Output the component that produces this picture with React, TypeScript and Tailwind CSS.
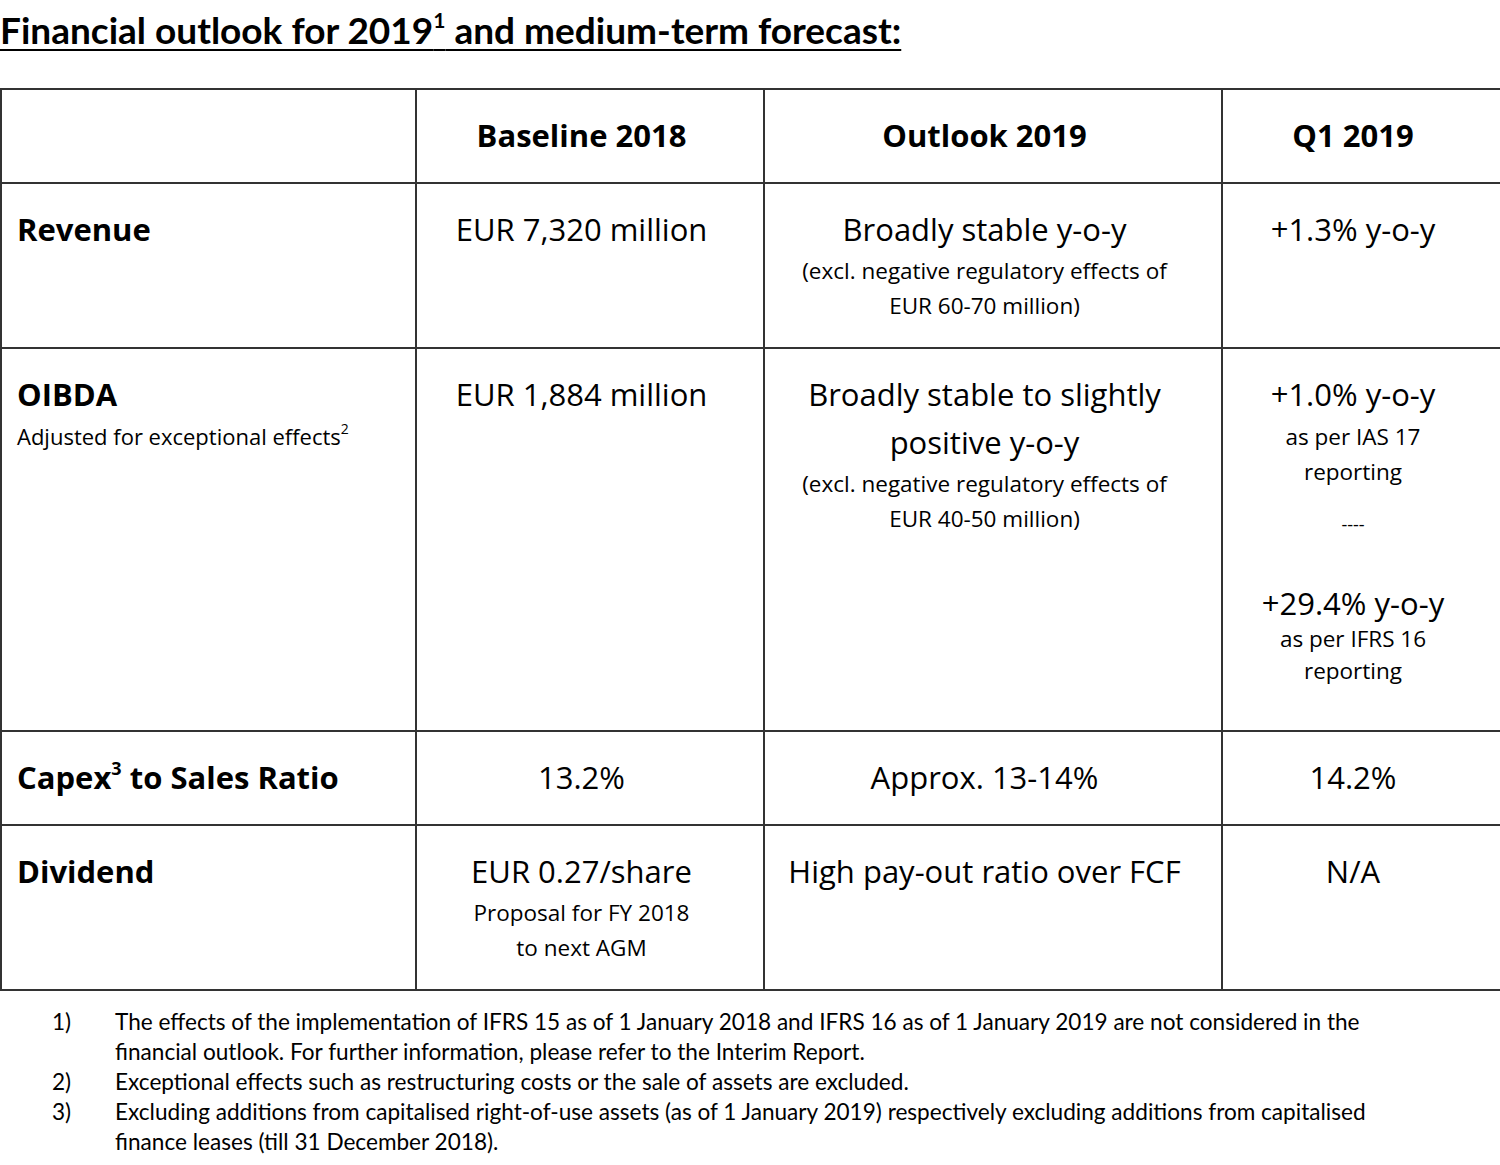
import React from 'react';

const body = { fontFamily: '"Open Sans", "Noto Sans", sans-serif' };
const calibri = { fontFamily: 'Lato, "Liberation Sans", sans-serif' };

const cell = 'border-2 border-[#333] align-top pt-[21px] pb-4 pr-[17px] text-center text-black';

function Main({ children }: { children: React.ReactNode }) {
  return <div className="text-[31px] leading-[48px]">{children}</div>;
}

function Sub({ children }: { children: React.ReactNode }) {
  return <div className="text-[22.5px] leading-[35px]">{children}</div>;
}

function Label({ title, note }: { title: React.ReactNode; note?: React.ReactNode }) {
  return (
    <td className="border-2 border-[#333] align-top pt-[21px] pl-[15px] text-left">
      <div className="text-[31px] leading-[48px] font-bold">{title}</div>
      {note && <div className="text-[22px] leading-[30px] mt-[3px]">{note}</div>}
    </td>
  );
}

const footnotes = [
  ['1)', 'The effects of the implementation of IFRS 15 as of 1 January 2018 and IFRS 16 as of 1 January 2019 are not considered in the financial outlook. For further information, please refer to the Interim Report.'],
  ['2)', 'Exceptional effects such as restructuring costs or the sale of assets are excluded.'],
  ['3)', 'Excluding additions from capitalised right-of-use assets (as of 1 January 2019) respectively excluding additions from capitalised finance leases (till 31 December 2018).'],
];

export default function App() {
  return (
    <div className="w-[1500px] h-[1165px] bg-white text-black overflow-hidden">
      <h1 className="text-[37px] leading-[40px] font-bold underline decoration-2 underline-offset-[5px] pt-[10px]" style={calibri}>
        Financial outlook for 2019<sup className="text-[21px] -top-[0.75em]">1</sup> and medium-term forecast:
      </h1>

      <table className="mt-[38px] w-[1500px] border-collapse table-fixed" style={body}>
        <colgroup>
          <col className="w-[415px]" />
          <col className="w-[348px]" />
          <col className="w-[458px]" />
          <col className="w-[279px]" />
        </colgroup>
        <tbody>
          <tr className="h-[94px]">
            <td className="border-2 border-[#333]"></td>
            {['Baseline 2018', 'Outlook 2019', 'Q1 2019'].map(h => (
              <td key={h} className={cell + ' font-bold'}>
                <Main>{h}</Main>
              </td>
            ))}
          </tr>
          <tr className="h-[165px]">
            <Label title="Revenue" />
            <td className={cell}><Main>EUR 7,320 million</Main></td>
            <td className={cell}>
              <Main>Broadly stable y-o-y</Main>
              <Sub>(excl. negative regulatory effects of</Sub>
              <Sub>EUR 60-70 million)</Sub>
            </td>
            <td className={cell}><Main>+1.3% y-o-y</Main></td>
          </tr>
          <tr className="h-[383px]">
            <Label
              title="OIBDA"
              note={<>Adjusted for exceptional effects<sup className="text-[14px] -top-[0.8em]">2</sup></>}
            />
            <td className={cell}><Main>EUR 1,884 million</Main></td>
            <td className={cell}>
              <Main>Broadly stable to slightly</Main>
              <Main>positive y-o-y</Main>
              <Sub>(excl. negative regulatory effects of</Sub>
              <Sub>EUR 40-50 million)</Sub>
            </td>
            <td className={cell}>
              <Main>+1.0% y-o-y</Main>
              <div className="mt-[1px]">
                <Sub>as per IAS 17</Sub>
                <Sub>reporting</Sub>
              </div>
              <div className="text-[18px] leading-[18px] mt-[26px]">----</div>
              <div className="mt-[46px]"><Main>+29.4% y-o-y</Main></div>
              <div className="-mt-[6px]">
                <Sub>as per IFRS 16</Sub>
                <div className="text-[22.5px] leading-[30px]">reporting</div>
              </div>
            </td>
          </tr>
          <tr className="h-[94px]">
            <Label title={<>Capex<sup className="text-[18px] -top-[0.8em]">3</sup> to Sales Ratio</>} />
            <td className={cell}><Main>13.2%</Main></td>
            <td className={cell}><Main>Approx. 13-14%</Main></td>
            <td className={cell}><Main>14.2%</Main></td>
          </tr>
          <tr className="h-[165px]">
            <Label title="Dividend" />
            <td className={cell}>
              <Main>EUR 0.27/share</Main>
              <Sub>Proposal for FY 2018</Sub>
              <Sub>to next AGM</Sub>
            </td>
            <td className={cell}><Main>High pay-out ratio over FCF</Main></td>
            <td className={cell}><Main>N/A</Main></td>
          </tr>
        </tbody>
      </table>

      <ol className="mt-[16px] text-[22.6px] leading-[30px]" style={calibri}>
        {footnotes.map(([n, t]) => (
          <li key={n} className="flex">
            <span className="w-[115px] shrink-0 pl-[52px]">{n}</span>
            <span className="w-[1300px]">{t}</span>
          </li>
        ))}
      </ol>
    </div>
  );
}
